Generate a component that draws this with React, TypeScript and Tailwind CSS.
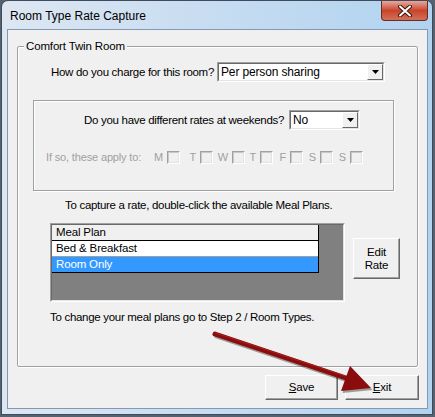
const font = { fontFamily: '"Liberation Sans", Arial, sans-serif' };

function Combo({ value, width }: { value: string; width: string }) {
  return (
    <div
      className={`${width} h-[20px] flex border border-t-[#a0a0a0] border-l-[#a0a0a0] border-r-white border-b-white`}
    >
      <div className="flex-1 flex border border-t-[#696969] border-l-[#696969] border-r-[#e3e3e3] border-b-[#e3e3e3] bg-white">
        <div className="flex-1 pl-[2px] text-[12px] leading-[16px] text-black whitespace-nowrap">{value}</div>
        <div className="w-[16px] h-[16px] flex items-center justify-center bg-[#f0f0f0] border border-t-white border-l-white border-r-[#696969] border-b-[#696969]">
          <svg width="7" height="4" viewBox="0 0 7 4">
            <path d="M0 0h7L3.5 4z" fill="#000" />
          </svg>
        </div>
      </div>
    </div>
  );
}

function DayBox({ letter, width }: { letter: string; width: string }) {
  return (
    <div className={`${width} flex items-center justify-end gap-[4px]`}>
      <span className="text-[#a0a0a0]">{letter}</span>
      <div className="w-[13px] h-[13px] border border-t-[#a0a0a0] border-l-[#a0a0a0] border-r-white border-b-white">
        <div className="w-full h-full border border-t-[#c8c8c8] border-l-[#c8c8c8] border-r-[#e3e3e3] border-b-[#e3e3e3] bg-[#f0f0f0]" />
      </div>
    </div>
  );
}

function Button({ children, className }: { children: React.ReactNode; className: string }) {
  return (
    <div
      className={`${className} flex flex-col items-center justify-center border border-t-white border-l-white border-r-[#696969] border-b-[#696969] bg-[#f0f0f0] shadow-[inset_-1px_-1px_0_#a0a0a0] leading-[13px] text-black`}
    >
      {children}
    </div>
  );
}

export default function App() {
  return (
    <div className="relative w-[435px] h-[417px] bg-[#56626f] overflow-hidden" style={font}>
      <div className="ml-[1px] w-[432px] h-[415px] rounded-t-[7px] border border-[#3d4b5c] bg-gradient-to-r from-[#dde7f2] via-[#c6dcf1] to-[#b1d3f0] flex flex-col">
        {/* title bar */}
        <div className="h-[28px] flex items-start justify-between">
          <div className="pl-[8px] pt-[7px] text-[12px] leading-[16px] text-black">Room Type Rate Capture</div>
          <div className="mr-[4px] w-[47px] h-[20px] rounded-b-[4px] border border-t-0 border-[#6d2a20] bg-gradient-to-b from-[#e4a89c] via-[#c8432c] to-[#d36f57] flex items-center justify-center">
            <svg width="14" height="12" viewBox="0 0 14 12">
              <path d="M2 1.5l10 9M12 1.5l-10 9" stroke="#3b1510" strokeWidth="4" strokeLinecap="round" />
              <path d="M2 1.5l10 9M12 1.5l-10 9" stroke="#fff" strokeWidth="2" strokeLinecap="round" />
            </svg>
          </div>
        </div>

        {/* client area */}
        <div className="ml-[5px] w-[421px] h-[380px] border border-[#8399b3] bg-[#f0f0f0] text-[11px] leading-[14px] tracking-[-0.15px] text-black">
          {/* group box */}
          <div className="ml-[9px] mt-[16px] w-[401px] h-[321px] border border-[#a0a0a0] rounded-[2px] shadow-[inset_1px_1px_0_#fff,1px_1px_0_#fff] flex flex-col">
            <div className="ml-[6px] -mt-[8px] w-fit px-[2px] bg-[#f0f0f0] text-[11.5px] leading-[14px]">Comfort Twin Room</div>

            <div className="mt-[9px] pl-[33px] h-[20px] flex items-center">
              <span className="w-[159px] mr-[7px] whitespace-nowrap text-[11.5px] tracking-[-0.3px]">How do you charge for this room?</span>
              <Combo value="Per person sharing" width="w-[168px]" />
            </div>

            {/* weekend box */}
            <div className="mt-[18px] ml-[15px] w-[361px] h-[91px] border border-[#a0a0a0] shadow-[inset_1px_1px_0_#fff,1px_1px_0_#fff] flex flex-col">
              <div className="mt-[9px] pl-[50px] h-[20px] flex items-center">
                <span className="w-[199px] mr-[6px] whitespace-nowrap text-[11.5px] tracking-[-0.3px]">Do you have different rates at weekends?</span>
                <Combo value="No" width="w-[71px]" />
              </div>
              <div className="mt-[20px] pl-[12px] h-[14px] flex items-center">
                <span className="w-[100px] whitespace-nowrap text-[#a0a0a0]">If so, these apply to:</span>
                <DayBox letter="M" width="w-[34px]" />
                <DayBox letter="T" width="w-[33px]" />
                <DayBox letter="W" width="w-[32px]" />
                <DayBox letter="T" width="w-[28px]" />
                <DayBox letter="F" width="w-[30px]" />
                <DayBox letter="S" width="w-[30px]" />
                <DayBox letter="S" width="w-[30px]" />
              </div>
            </div>

            <div className="mt-[7px] pl-[47px] whitespace-nowrap text-[11.5px] tracking-[-0.3px]">
              To capture a rate, double-click the available Meal Plans.
            </div>

            <div className="mt-[11px] flex items-start">
              {/* list */}
              <div className="ml-[32px] w-[295px] h-[79px] border border-t-[#a0a0a0] border-l-[#a0a0a0] border-r-white border-b-white">
                <div className="w-full h-full border border-t-[#696969] border-l-[#696969] border-r-[#e3e3e3] border-b-[#e3e3e3] bg-[#808080]">
                  <div className="w-[267px] border-r border-black text-[11.5px] leading-[15px]">
                    <div className="h-[16px] pl-[4px] bg-[#f0f0f0] border-b border-black">Meal Plan</div>
                    <div className="h-[16px] pl-[4px] bg-white border-b border-[#a0a0a0]">Bed &amp; Breakfast</div>
                    <div className="h-[16px] pl-[4px] bg-[#3399ff] text-white border-b border-black">Room Only</div>
                  </div>
                </div>
              </div>
              <Button className="ml-[8px] mt-[15px] w-[47px] h-[41px] text-[11.5px]">
                <span>Edit</span>
                <span>Rate</span>
              </Button>
            </div>

            <div className="mt-[8px] pl-[32px] whitespace-nowrap text-[11.5px] tracking-[-0.3px]">
              To change your meal plans go to Step 2 / Room Types.
            </div>
          </div>

          {/* bottom buttons */}
          <div className="mt-[8px] flex">
            <Button className="ml-[257px] w-[73px] h-[25px] text-[11.5px]">
              <span>
                <span className="underline">S</span>ave
              </span>
            </Button>
            <Button className="ml-[7px] w-[74px] h-[25px] text-[11.5px]">
              <span>
                <span className="underline">E</span>xit
              </span>
            </Button>
          </div>
        </div>
      </div>

      {/* annotation arrow */}
      <svg className="absolute left-0 top-0 pointer-events-none" width="435" height="417" viewBox="0 0 435 417">
        <g transform="translate(1.5 2)" opacity="0.35">
          <path d="M215 334L346 378" stroke="#000" strokeWidth="5" strokeLinecap="round" />
          <path d="M371 388L341 391L350 366z" fill="#000" />
        </g>
        <path d="M215 334L346 378" stroke="#8a0c0c" strokeWidth="5" strokeLinecap="round" />
        <path d="M371 388L341 391L350 366z" fill="#8a0c0c" />
        <path d="M216 333L345 376" stroke="#a52020" strokeWidth="1.2" strokeLinecap="round" />
      </svg>
    </div>
  );
}
